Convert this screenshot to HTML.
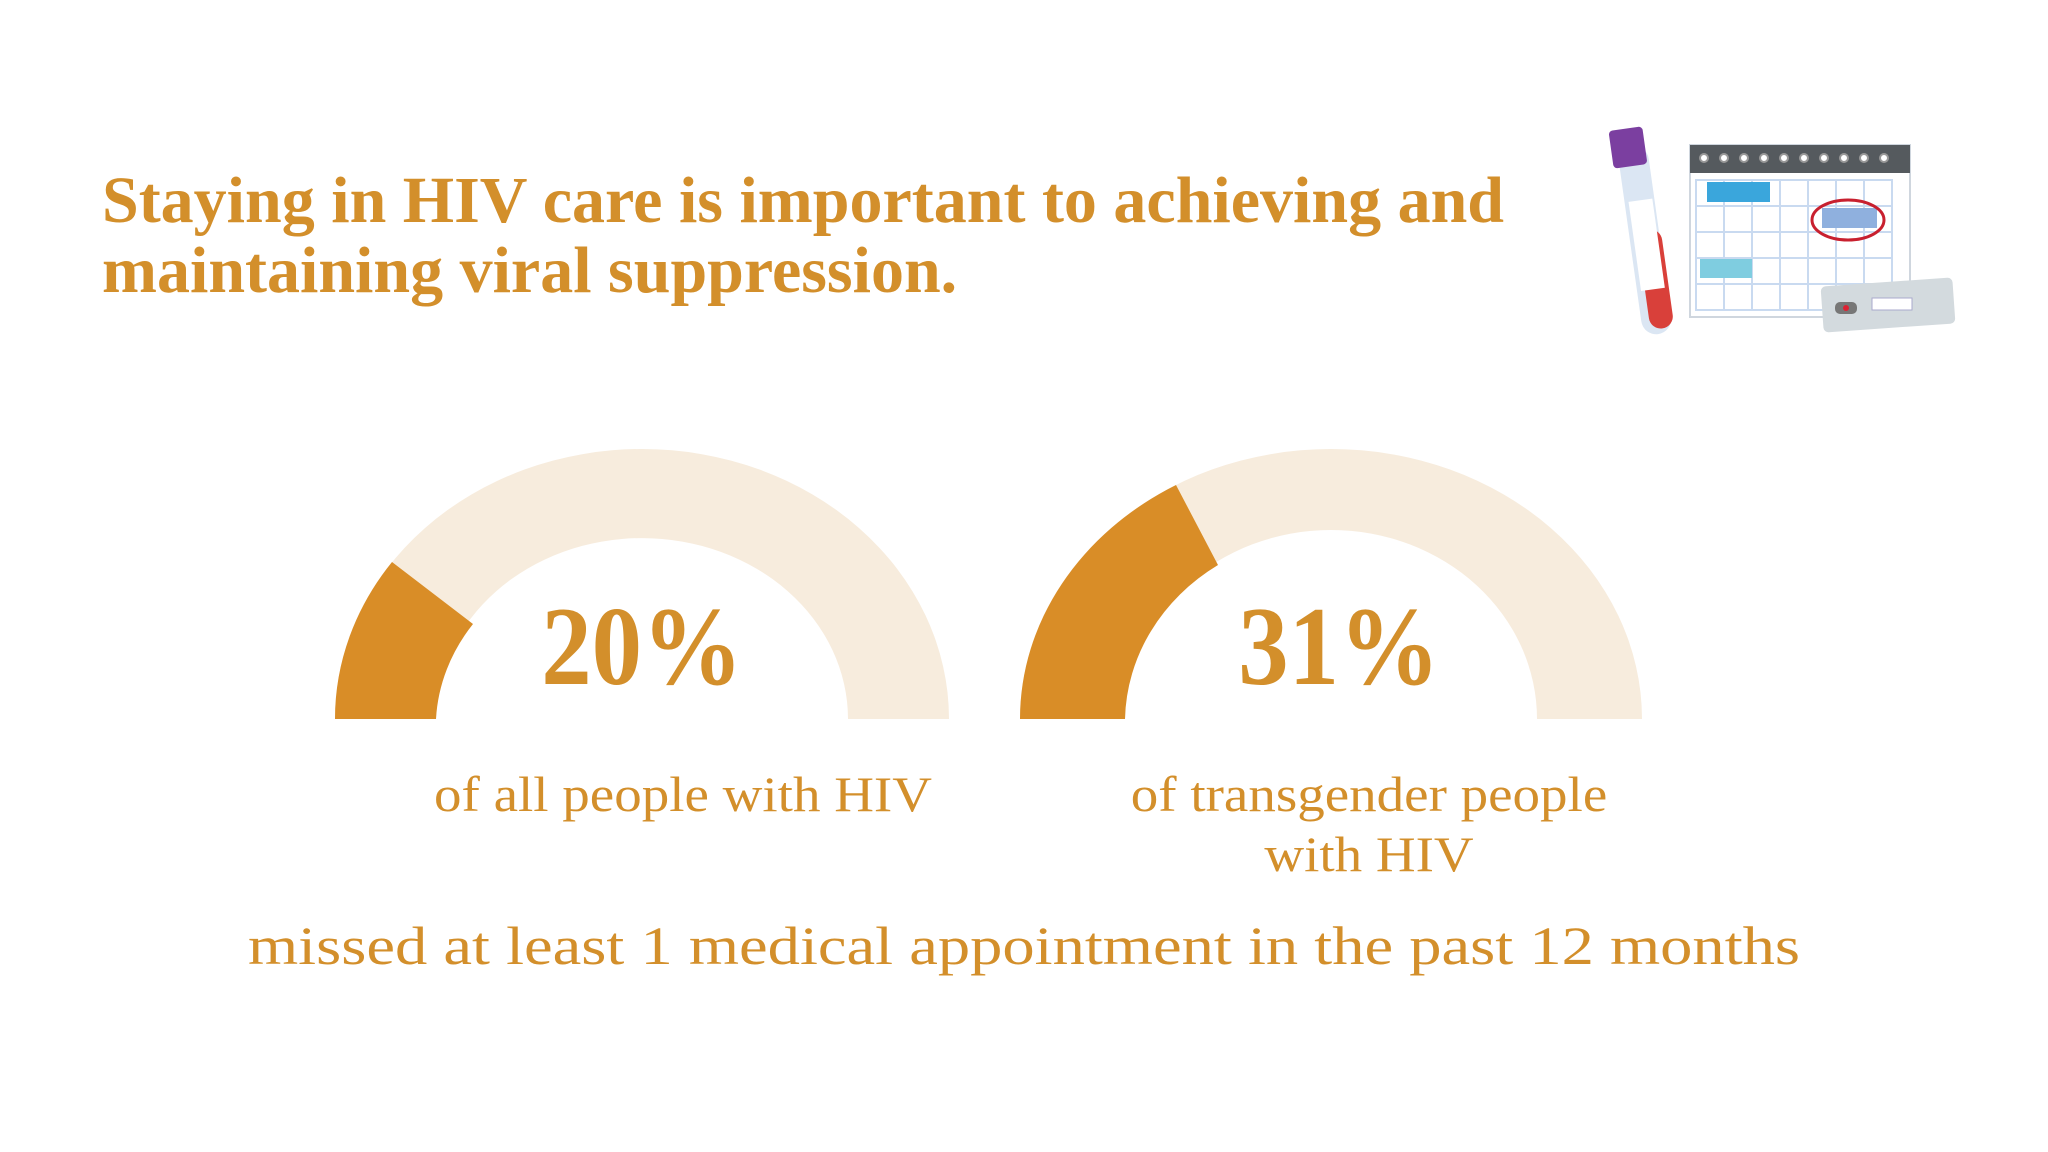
<!DOCTYPE html>
<html><head><meta charset="utf-8"><style>
html,body{margin:0;padding:0;background:#fff;}
body{width:2048px;height:1152px;overflow:hidden;position:relative;font-family:"Liberation Serif",serif;color:#D38F2B;}
.t{position:absolute;white-space:nowrap;font-weight:bold;}
</style></head><body>
<svg width="2048" height="1152" style="position:absolute;left:0;top:0">
<path d="M335 719 A307 270 0 0 1 949 719 L848 719 A206 181 0 0 0 436 719 Z" fill="#F7ECDD"/>
<path d="M335 719 A307 270 0 0 1 392 562 L473 624 A206 181 0 0 0 436 719 Z" fill="#D98D27"/>
<path d="M1020 719 A311 270 0 0 1 1642 719 L1537 719 A206 189 0 0 0 1125 719 Z" fill="#F7ECDD"/>
<path d="M1020 719 A311 270 0 0 1 1176 485 L1218 565 A206 189 0 0 0 1125 719 Z" fill="#D98D27"/>
<g>
<rect x="1690" y="145" width="220" height="172" fill="#fff" stroke="#cfd6de" stroke-width="2"/>
<rect x="1690" y="145" width="220" height="28" fill="#555a5e"/>
<g fill="#fff" stroke="#999" stroke-width="2">
<circle cx="1704" cy="158" r="4"/><circle cx="1724" cy="158" r="4"/><circle cx="1744" cy="158" r="4"/><circle cx="1764" cy="158" r="4"/><circle cx="1784" cy="158" r="4"/><circle cx="1804" cy="158" r="4"/><circle cx="1824" cy="158" r="4"/><circle cx="1844" cy="158" r="4"/><circle cx="1864" cy="158" r="4"/><circle cx="1884" cy="158" r="4"/>
</g>
<g stroke="#c9daf0" stroke-width="2" fill="none">
<rect x="1696" y="180" width="196" height="130"/>
<line x1="1724" y1="180" x2="1724" y2="310"/><line x1="1752" y1="180" x2="1752" y2="310"/><line x1="1780" y1="180" x2="1780" y2="310"/><line x1="1808" y1="180" x2="1808" y2="310"/><line x1="1836" y1="180" x2="1836" y2="310"/><line x1="1864" y1="180" x2="1864" y2="310"/>
<line x1="1696" y1="206" x2="1892" y2="206"/><line x1="1696" y1="232" x2="1892" y2="232"/><line x1="1696" y1="258" x2="1892" y2="258"/><line x1="1696" y1="284" x2="1892" y2="284"/>
</g>
<rect x="1707" y="182" width="63" height="20" fill="#3aa6dc"/>
<rect x="1822" y="208" width="55" height="20" fill="#8fb0de"/>
<ellipse cx="1848" cy="220" rx="36" ry="20" fill="none" stroke="#c8202f" stroke-width="3"/>
<rect x="1700" y="259" width="52" height="19" fill="#7fcde0"/>
<rect x="1822" y="282" width="132" height="46" rx="5" fill="#d3dade" transform="rotate(-4 1888 305)"/>
<rect x="1835" y="302" width="22" height="12" rx="5" fill="#777"/>
<circle cx="1846" cy="308" r="3" fill="#d23"/>
<rect x="1872" y="298" width="40" height="12" fill="#fff" stroke="#aac" />
<rect x="1630" y="145" width="30" height="190" rx="15" fill="#dbe6f3" transform="rotate(-8 1645 240)"/>
<rect x="1638" y="230" width="24" height="100" rx="12" fill="#d9403a" transform="rotate(-8 1645 240)"/>
<rect x="1634" y="200" width="24" height="90" fill="#fff" transform="rotate(-8 1645 240)"/>
<rect x="1624" y="127" width="34" height="38" rx="4" fill="#7b3fa0" transform="rotate(-8 1645 240)"/>
</g>
</svg>
<div class="t" style="left:102px;top:166px;font-size:66px;line-height:70px;">Staying in HIV care is important to achieving and<br>maintaining viral suppression.</div>
<div class="t" style="left:442px;width:400px;text-align:center;top:587px;font-size:112px;line-height:120px;transform:scaleX(0.9);">20%</div>
<div class="t" style="left:1139px;width:400px;text-align:center;top:587px;font-size:112px;line-height:120px;transform:scaleX(0.9);">31%</div>
<div class="t" style="left:383px;width:600px;text-align:center;top:764px;font-size:50px;line-height:60px;font-weight:normal;transform:scaleX(1.1);">of all people with HIV</div>
<div class="t" style="left:1069px;width:600px;text-align:center;top:764px;font-size:50px;line-height:60px;font-weight:normal;transform:scaleX(1.1);">of transgender people<br>with HIV</div>
<div class="t" style="left:124px;width:1800px;text-align:center;top:916px;font-size:54px;line-height:60px;font-weight:normal;transform:scaleX(1.195);">missed at least 1 medical appointment in the past 12 months</div>
</body></html>
